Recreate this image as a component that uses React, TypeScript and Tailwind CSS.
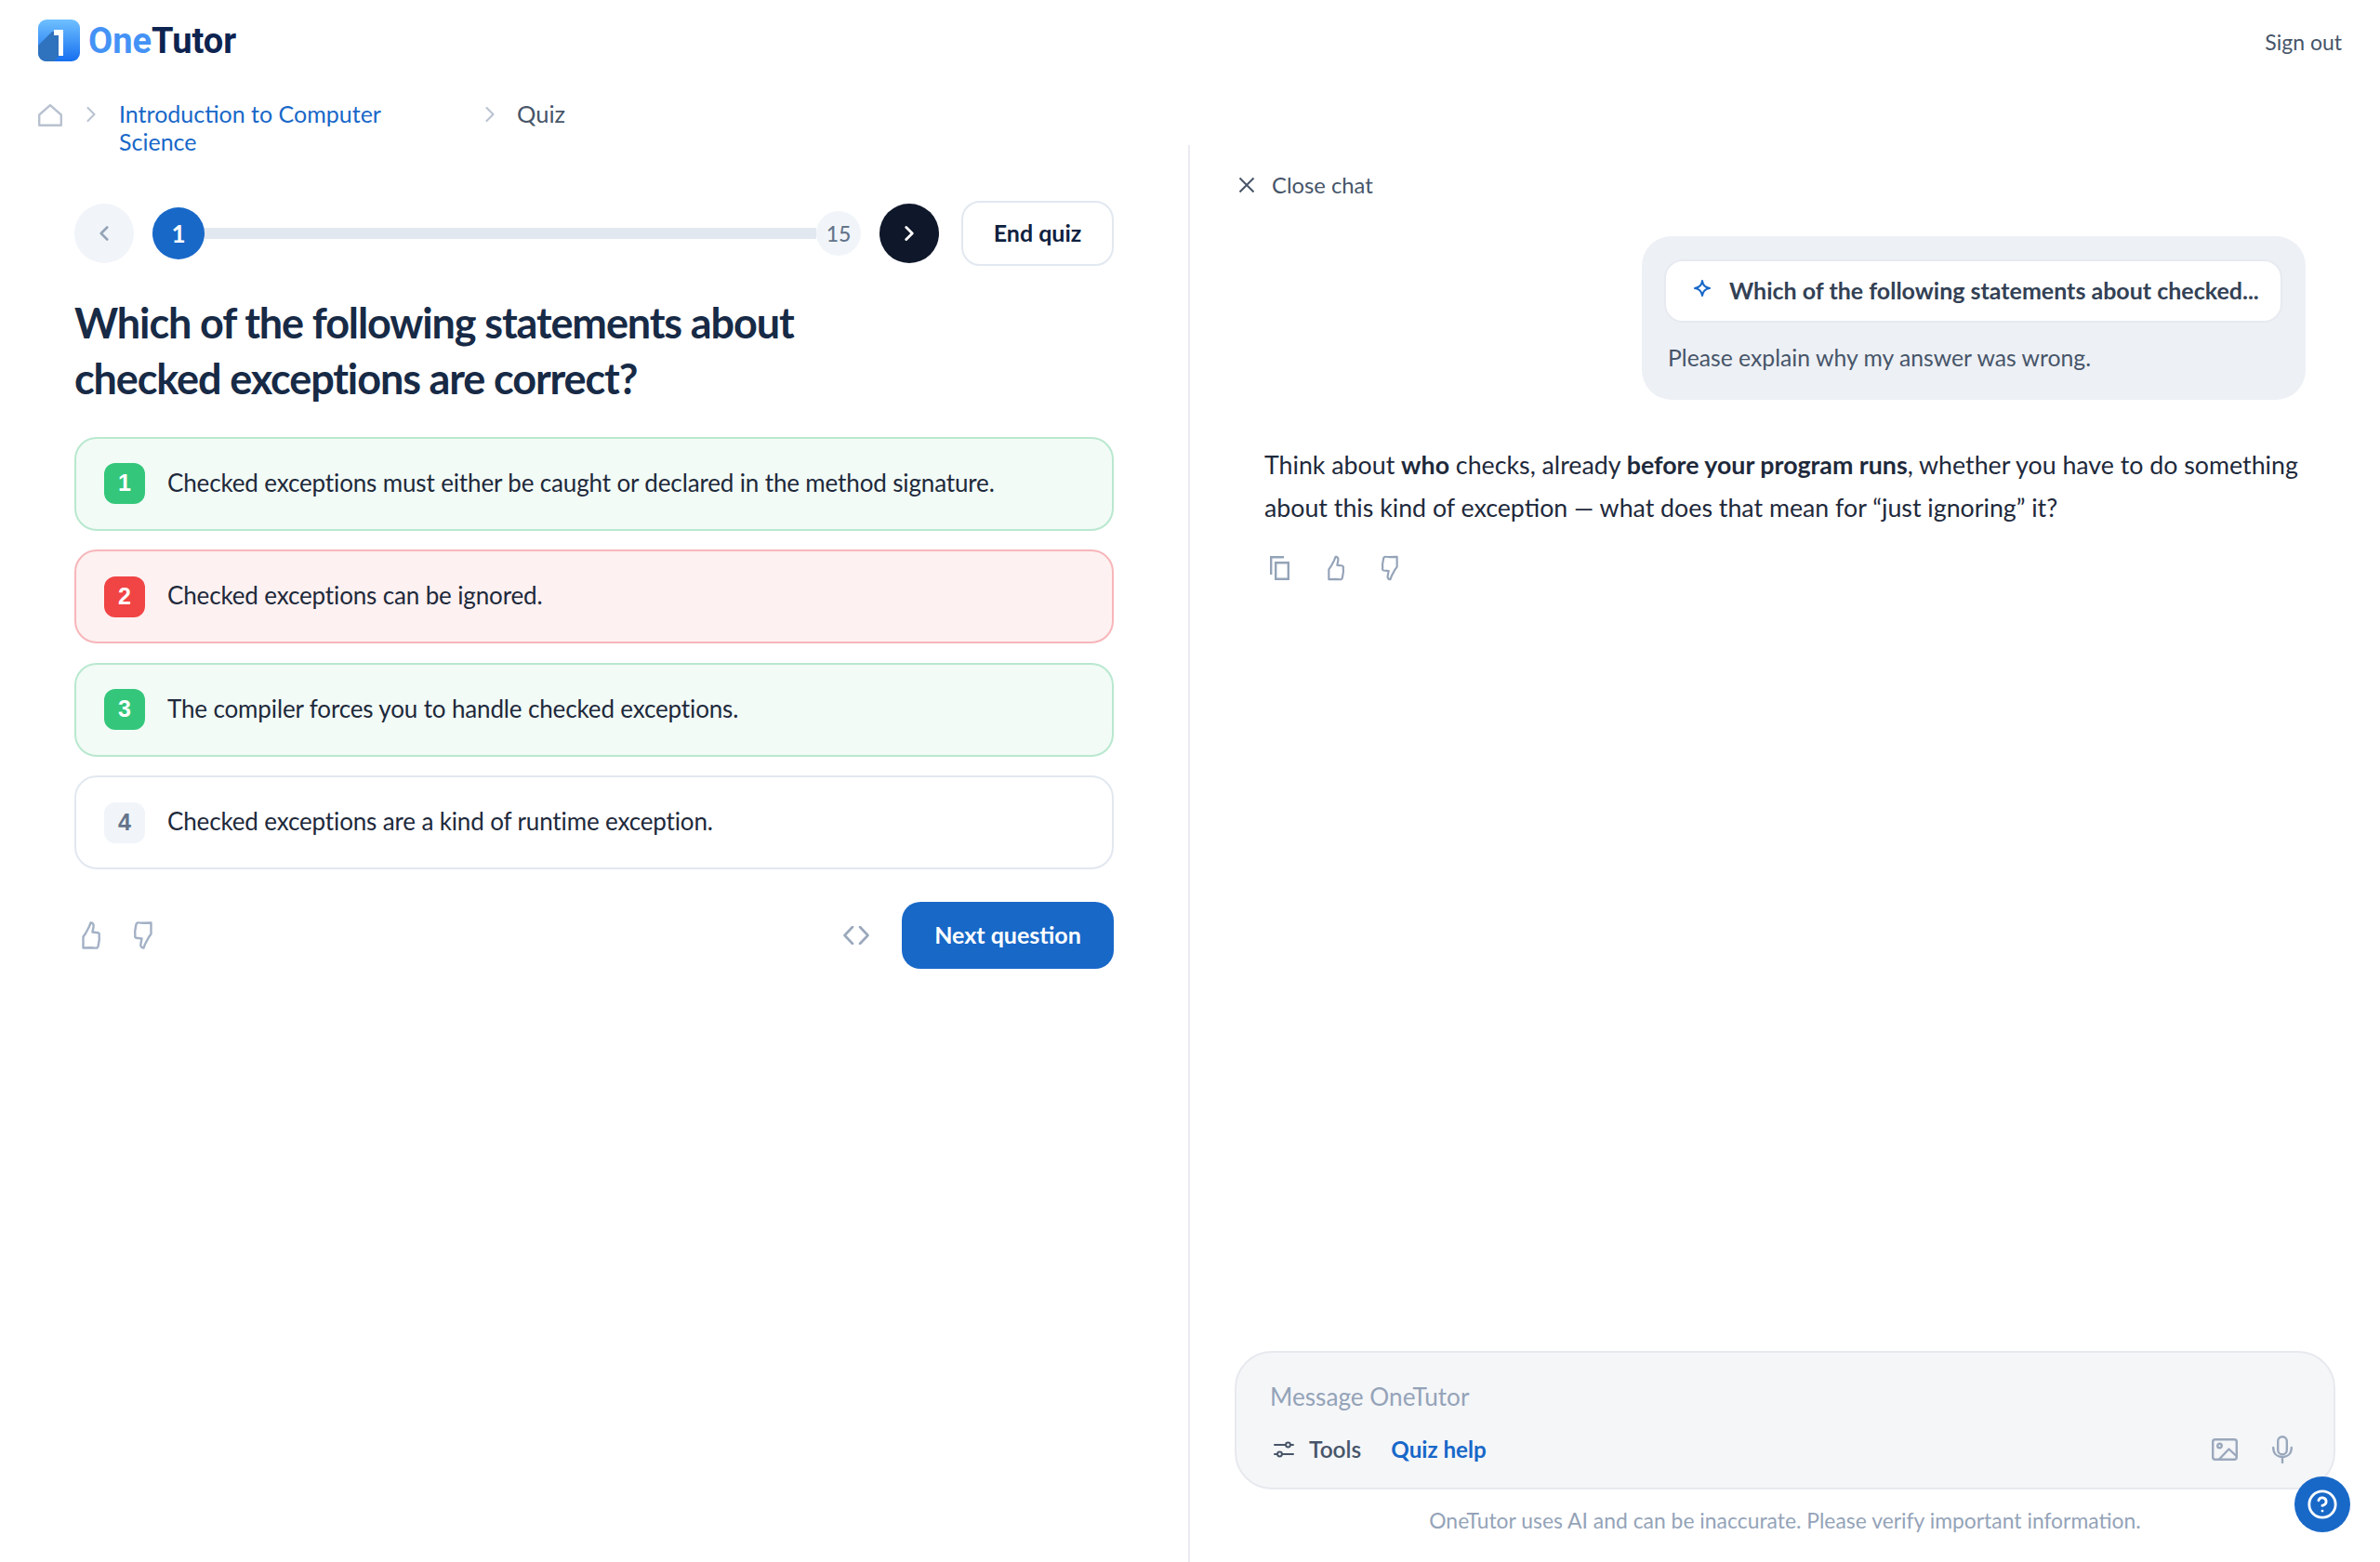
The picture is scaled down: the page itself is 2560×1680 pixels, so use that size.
import { ChevronLeft, ChevronRight, CircleHelp } from "lucide-react"

const OPTIONS = [
  {
    n: 1,
    text: "Checked exceptions must either be caught or declared in the method signature.",
    box: "border-[#b9e8cf] bg-[#f2fbf6]",
    badge: "bg-[#34c77b] text-white",
  },
  {
    n: 2,
    text: "Checked exceptions can be ignored.",
    box: "border-[#f7b6ba] bg-[#fdf1f1]",
    badge: "bg-[#f14445] text-white",
  },
  {
    n: 3,
    text: "The compiler forces you to handle checked exceptions.",
    box: "border-[#b9e8cf] bg-[#f2fbf6]",
    badge: "bg-[#34c77b] text-white",
  },
  {
    n: 4,
    text: "Checked exceptions are a kind of runtime exception.",
    box: "border-[#e2e8f0] bg-white",
    badge: "bg-[#f1f5f9] text-[#64748b]",
  },
]

const ThumbUp = ({ className }: { className?: string }) => (
  <svg viewBox="0 0 20 30" fill="none" stroke="currentColor" strokeWidth="2.4" strokeLinejoin="round" strokeLinecap="round" className={className}>
    <path d="M1.5 28.5V16.5L4 13L8 5.5L9.5 1.5C11.5 1.2 13 3 12.6 5.5L11.5 11.5L17.5 12.2C18.8 12.5 19 14 18.6 15.5L18.9 19L17.6 26.5C17.3 28 16 28.8 14.5 28.6L10 28.2L1.5 28.5Z" />
  </svg>
)

const Logo = () => (
  <svg viewBox="0 0 45 45" className="h-[45px] w-[45px]">
    <defs>
      <linearGradient id="logoBg" x1="0" y1="0" x2="0" y2="1">
        <stop offset="0" stopColor="#6fc0ff" />
        <stop offset="1" stopColor="#166ff0" />
      </linearGradient>
    </defs>
    <rect width="45" height="45" rx="9" fill="url(#logoBg)" />
    <path d="M0 28L15 13H22L22 40L17 45H9C4 45 0 41 0 36Z" fill="#2f72bd" />
    <path d="M17 11H27V39H22V17H17Z" fill="#fff" />
  </svg>
)

export default function App() {
  return (
    <div className="flex h-[1680px] w-full flex-col overflow-hidden bg-white font-[family-name:Lato,sans-serif] text-[#1e293b]">
      <header className="flex h-[107px] items-start justify-between pl-[41px] pr-[41px] pt-[20px]">
        <div className="flex items-center gap-[9px]">
          <Logo />
          <span className="mt-[2px] font-[family-name:Roboto,sans-serif] text-[38px] font-bold leading-[45px]">
            <span className="text-[#4492f6]">One</span>
            <span className="text-[#0d2350]">Tutor</span>
          </span>
        </div>
        <span className="mt-[10px] text-[23px] leading-[30px] text-[#475569]">Sign out</span>
      </header>

      <nav className="flex h-[49px] items-start pl-[41px]">
        <svg viewBox="0 0 26 24" fill="none" stroke="#b8c2d0" strokeWidth="2.4" strokeLinejoin="round" className="mt-[5px] h-[24px] w-[26px]">
          <path d="M13 1.2L24.8 11.5V22.8H1.2V11.5Z" />
        </svg>
        <ChevronRight className="ml-[17px] mt-[2px] h-[28px] w-[28px] text-[#b8c2d0]" strokeWidth={1.8} />
        <a className="ml-[16px] w-[370px] text-[25px] leading-[30px] text-[#1868c8]">Introduction to Computer Science</a>
        <ChevronRight className="ml-[15px] mt-[2px] h-[28px] w-[28px] text-[#b8c2d0]" strokeWidth={1.8} />
        <span className="ml-[15px] text-[25.5px] leading-[30px] text-[#475569]">Quiz</span>
      </nav>

      <main className="flex min-h-0 flex-1">
        <section className="w-[1280px] shrink-0 border-r-2 border-[#e8ebf0] pl-[80px] pr-[80px] pt-[60px]">
          <div className="flex h-[70px] items-center">
            <button className="flex h-[64px] w-[64px] items-center justify-center rounded-full bg-[#f1f5f9] text-[#94a3b8]">
              <ChevronLeft className="h-[26px] w-[26px]" strokeWidth={2.4} />
            </button>
            <div className="ml-[20px] flex flex-1 items-center">
              <span className="flex h-[56px] w-[56px] items-center justify-center rounded-full bg-[#1868c8] text-[26px] font-bold text-white">1</span>
              <div className="h-[12px] flex-1 bg-[#e2e8f0]" />
              <span className="flex h-[48px] w-[48px] items-center justify-center rounded-full bg-[#f1f5f9] text-[23px] font-medium text-[#64748b]">15</span>
            </div>
            <button className="ml-[20px] flex h-[64px] w-[64px] items-center justify-center rounded-full bg-[#0f172a] text-white">
              <ChevronRight className="h-[26px] w-[26px]" strokeWidth={2.6} />
            </button>
            <button className="ml-[24px] h-[70px] w-[164px] rounded-[20px] border-2 border-[#e2e8f0] text-[25px] font-bold text-[#0f213f]">End quiz</button>
          </div>

          <h1 className="mt-[32px] max-w-[800px] text-[45px] font-bold leading-[59.5px] tracking-[-0.025em] text-[#172a46]">
            Which of the following statements about checked exceptions are correct?
          </h1>

          <ul className="mt-[32.5px] flex flex-col gap-[20.6px]">
            {OPTIONS.map((o) => (
              <li key={o.n} className={"flex h-[101px] items-center rounded-[24px] border-2 pl-[30px] " + o.box}>
                <span className={"flex h-[44px] w-[44px] items-center justify-center rounded-[12px] font-[family-name:'Liberation_Sans',sans-serif] text-[25px] font-bold " + o.badge}>
                  {o.n}
                </span>
                <span className="mb-[3px] ml-[24px] text-[26px] leading-[36px] tracking-[-0.14px]">{o.text}</span>
              </li>
            ))}
          </ul>

          <div className="mt-[34.7px] flex items-center pl-[8px]">
            <ThumbUp className="h-[30px] w-[20px] text-[#a3b1c6]" />
            <ThumbUp className="ml-[36px] h-[30px] w-[20px] rotate-180 text-[#a3b1c6]" />
            <svg viewBox="0 0 28 20" fill="none" stroke="#9aa8bc" strokeWidth="2.6" strokeLinecap="round" strokeLinejoin="round" className="ml-auto h-[20px] w-[28px]">
              <path d="M10 1L1.5 10L10 19M18 1L26.5 10L18 19" />
            </svg>
            <button className="ml-[35px] h-[72px] w-[228px] rounded-[20px] bg-[#1868c8] text-[25px] font-bold text-white">Next question</button>
          </div>
        </section>

        <section className="flex min-w-0 flex-1 flex-col">
          <div className="flex items-center gap-[18px] pl-[52px] pt-[28px] text-[23.8px] leading-[30px] text-[#475569]">
            <svg viewBox="0 0 18 18" fill="none" stroke="currentColor" strokeWidth="2" className="h-[18px] w-[18px]">
              <path d="M1.5 1.5L16.5 16.5M16.5 1.5L1.5 16.5" />
            </svg>
            Close chat
          </div>

          <div className="ml-[486px] mr-[80px] mt-[40px] h-[176px] rounded-[32px] bg-[#edf0f5] pl-[24px] pr-[25px] pt-[25px]">
            <div className="flex h-[68px] items-center rounded-[20px] border-2 border-[#e7eaf0] bg-white pl-[30px]">
              <svg viewBox="0 0 18 18" fill="none" stroke="#1868c8" strokeWidth="2" strokeLinejoin="round" className="h-[18px] w-[18px] -translate-y-[3px]">
                <path d="M9 1C9.6 5.5 12 8.3 17 9C12 9.7 9.6 12.5 9 17C8.4 12.5 6 9.7 1 9C6 8.3 8.4 5.5 9 1Z" />
              </svg>
              <span className="ml-[20px] text-[25px] font-bold text-[#334155]">Which of the following statements about checked...</span>
            </div>
            <p className="mt-[23px] pl-[4px] text-[24.75px] leading-[30px] text-[#475569]">Please explain why my answer was wrong.</p>
          </div>

          <p className="ml-[80px] mr-[80px] mt-[47px] text-[26.75px] leading-[46px]">
            Think about <b>who</b> checks, already <b>before your program runs</b>, whether you have to do something about this kind of exception — what does that mean for “just ignoring” it?
          </p>

          <div className="ml-[86px] mt-[27px] flex items-center text-[#94a3b8]">
            <svg viewBox="0 0 21 26" fill="none" stroke="currentColor" strokeWidth="2.4" className="h-[26px] w-[21px]">
              <path d="M1.2 20V1.2H15M6.2 7.2H19.8V24.8H6.2Z" />
            </svg>
            <ThumbUp className="ml-[41px] h-[28px] w-[18px]" />
            <ThumbUp className="ml-[40px] h-[30px] w-[18px] rotate-180" />
          </div>

          <div className="ml-[48px] mr-[48px] mt-auto h-[149px] rounded-[40px] border-2 border-[#e7e9ee] bg-[#f5f6f8] pl-[36px] pr-[44px] pt-[32px]">
            <div className="text-[26.2px] leading-[30px] text-[#94a3b8]">Message OneTutor</div>
            <div className="mt-[27px] flex h-[30px] items-center pl-[4px]">
              <svg viewBox="0 0 22 18" fill="none" stroke="#475569" strokeWidth="2" strokeLinecap="round" className="h-[18px] w-[22px]">
                <path d="M1 4H13M18 4H21M1 14H4M9 14H21" />
                <circle cx="15.5" cy="4" r="2.4" />
                <circle cx="6.5" cy="14" r="2.4" />
              </svg>
              <span className="ml-[16px] text-[24.5px] font-semibold text-[#475569]">Tools</span>
              <span className="ml-[32px] text-[24.2px] font-bold text-[#1868c8]">Quiz help</span>
              <svg viewBox="0 0 28 24" fill="none" stroke="#9aa8bc" strokeWidth="2.4" strokeLinejoin="round" className="ml-auto h-[24px] w-[28px]">
                <rect x="1.2" y="1.2" width="25.6" height="21.6" rx="2.5" />
                <circle cx="8.5" cy="8" r="2.3" />
                <path d="M8 22.5L18.5 11.5L27 19.5" />
              </svg>
              <svg viewBox="0 0 22 30" fill="none" stroke="#9aa8bc" strokeWidth="2.4" strokeLinecap="round" className="ml-[37px] h-[30px] w-[22px]">
                <rect x="6.2" y="1.2" width="9.6" height="19" rx="4.8" />
                <path d="M1.2 13C1.2 19 5 23 11 23C17 23 20.8 19 20.8 13M11 23V29" />
              </svg>
            </div>
          </div>

          <p className="mb-[30px] mt-[18px] text-center text-[22.9px] leading-[30px] text-[#94a3b8]">
            OneTutor uses AI and can be inaccurate. Please verify important information.
          </p>
        </section>
      </main>

      <button className="fixed bottom-[32px] right-[32px] flex h-[60px] w-[60px] items-center justify-center rounded-full bg-[#1868c8] text-white">
        <CircleHelp className="h-[34px] w-[34px]" strokeWidth={2} />
      </button>
    </div>
  )
}
